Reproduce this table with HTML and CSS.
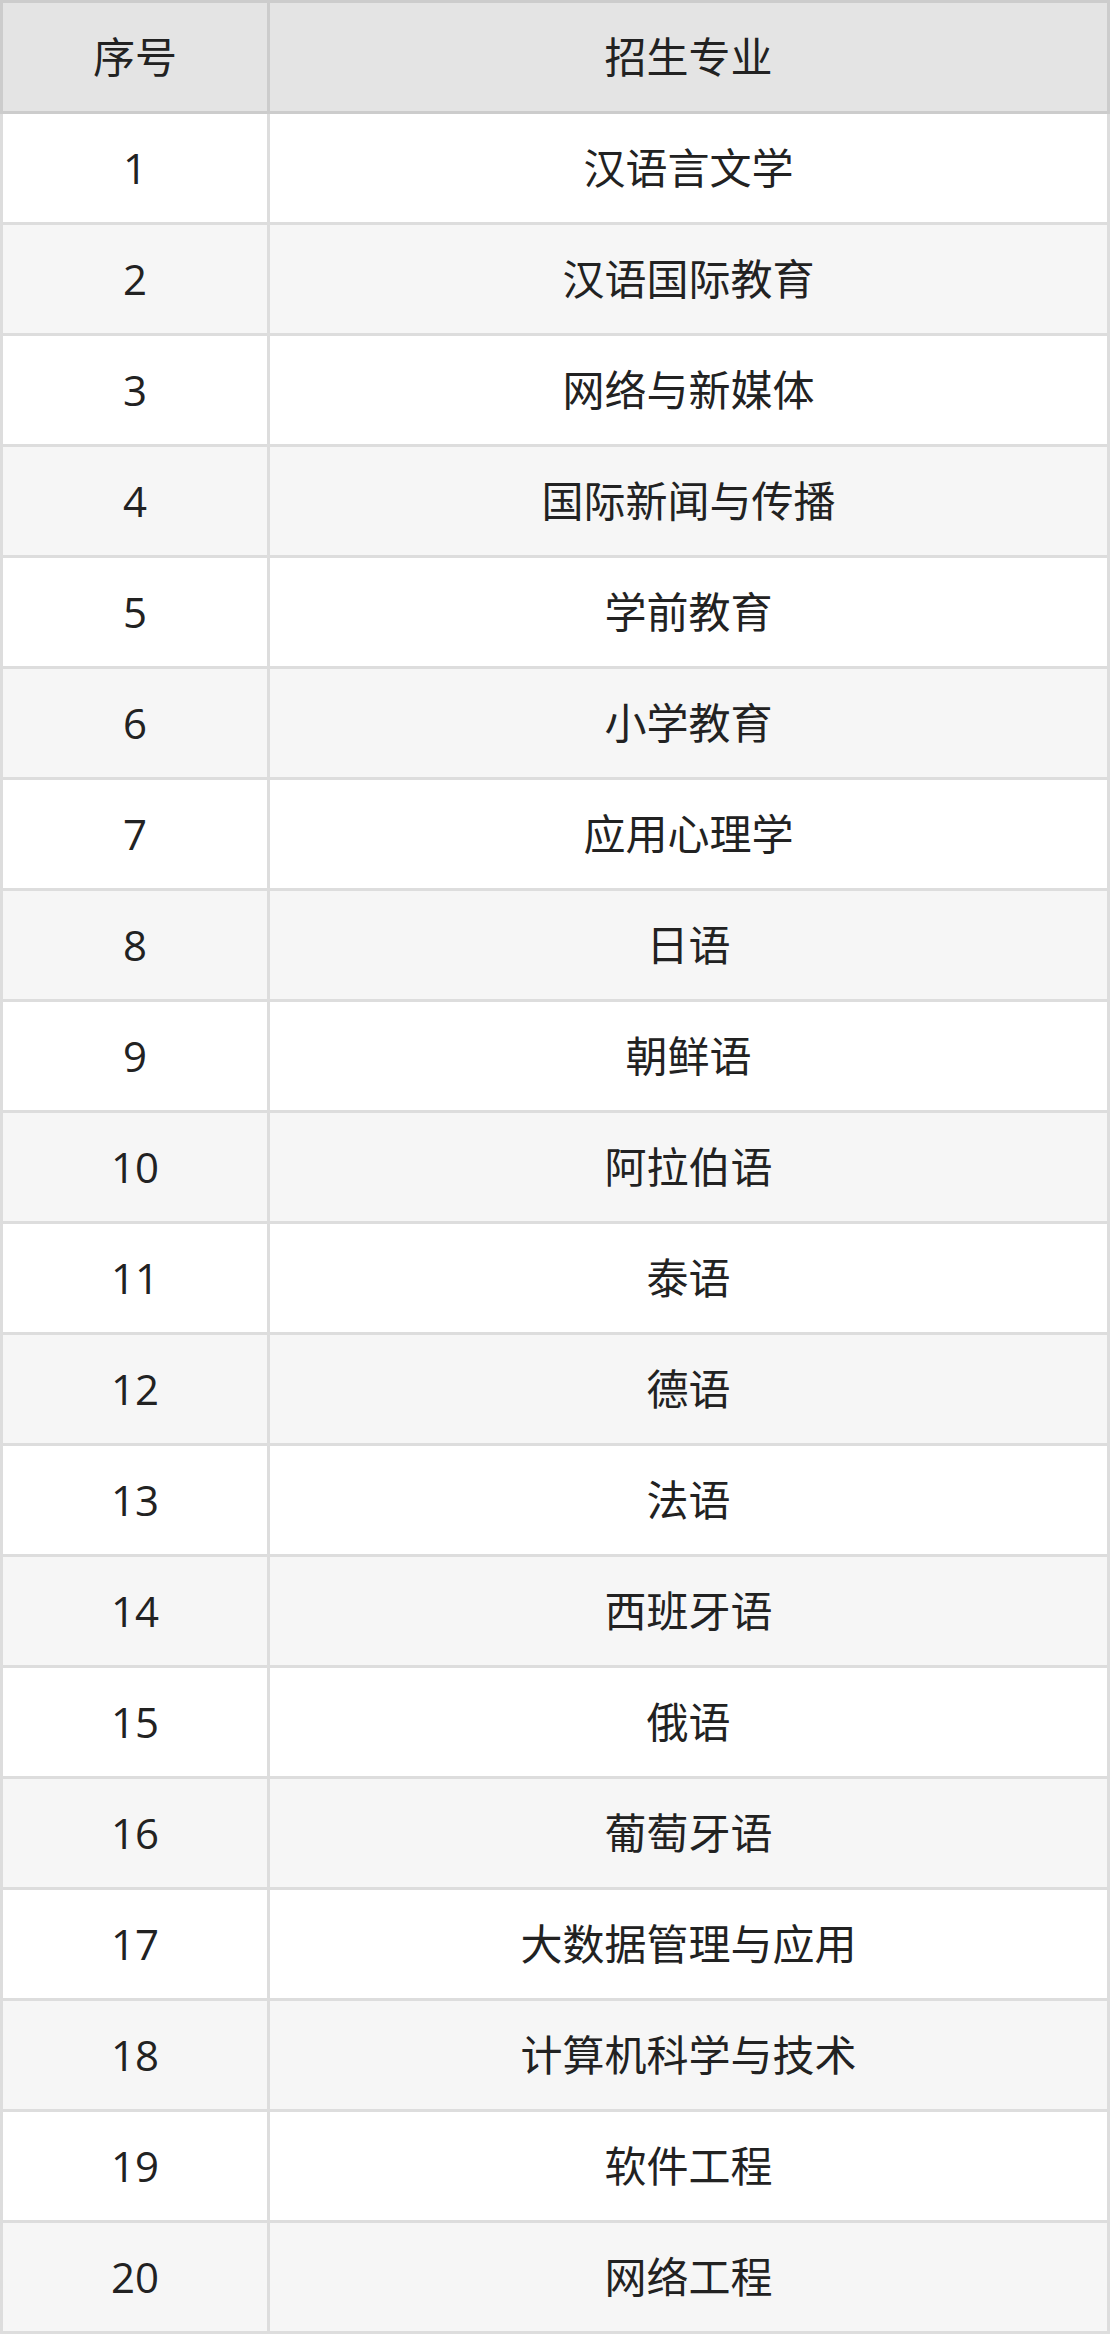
FILE: index.html
```html
<!DOCTYPE html>
<html lang="zh-CN">
<head>
<meta charset="utf-8">
<title>招生专业</title>
<link rel="stylesheet" href="styles.css">
</head>
<body>
<table class="majors">
  <colgroup><col class="col-no"><col class="col-name"></colgroup>
  <thead>
    <tr><th>序号</th><th>招生专业</th></tr>
  </thead>
  <tbody>
    <tr><td>1</td><td>汉语言文学</td></tr>
    <tr><td>2</td><td>汉语国际教育</td></tr>
    <tr><td>3</td><td>网络与新媒体</td></tr>
    <tr><td>4</td><td>国际新闻与传播</td></tr>
    <tr><td>5</td><td>学前教育</td></tr>
    <tr><td>6</td><td>小学教育</td></tr>
    <tr><td>7</td><td>应用心理学</td></tr>
    <tr><td>8</td><td>日语</td></tr>
    <tr><td>9</td><td>朝鲜语</td></tr>
    <tr><td>10</td><td>阿拉伯语</td></tr>
    <tr><td>11</td><td>泰语</td></tr>
    <tr><td>12</td><td>德语</td></tr>
    <tr><td>13</td><td>法语</td></tr>
    <tr><td>14</td><td>西班牙语</td></tr>
    <tr><td>15</td><td>俄语</td></tr>
    <tr><td>16</td><td>葡萄牙语</td></tr>
    <tr><td>17</td><td>大数据管理与应用</td></tr>
    <tr><td>18</td><td>计算机科学与技术</td></tr>
    <tr><td>19</td><td>软件工程</td></tr>
    <tr><td>20</td><td>网络工程</td></tr>
  </tbody>
</table>
</body>
</html>
```

FILE: styles.css
```css
html, body {
  margin: 0;
  padding: 0;
  background: #fff;
}

.majors {
  width: 1110px;
  table-layout: fixed;
  border-collapse: separate;
  border-spacing: 0;
  font-family: "Open Sans", "Noto Sans CJK SC", sans-serif;
  font-size: 42px;
  color: #222;
}

.col-no { width: 270px; }

.majors th,
.majors td {
  box-sizing: border-box;
  text-align: center;
  vertical-align: middle;
  padding: 0;
  font-weight: normal;
  line-height: 1;
  border-right: 3px solid #dddddd;
  border-bottom: 3px solid #dddddd;
}

.majors th {
  height: 114px;
  background: #e4e4e4;
  border-top: 3px solid #cccccc;
  border-right-color: #cccccc;
  border-bottom-color: #cccccc;
}

.majors th:first-child {
  border-left: 3px solid #cccccc;
}

.majors td {
  height: 111px;
  background: #ffffff;
}

.majors td:first-child {
  border-left: 3px solid #dddddd;
}

.majors tbody tr:nth-child(even) td {
  background: #f6f6f6;
}
```
